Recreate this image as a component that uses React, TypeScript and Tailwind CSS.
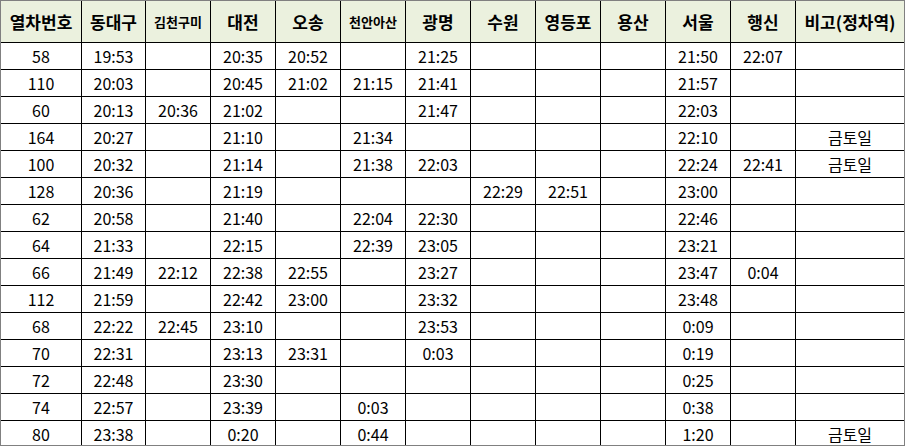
import React from "react";

/**
 * KTX timetable sheet (동대구 → 서울/행신)
 */

const HEADERS: { label: string; small?: boolean }[] = [
  { label: "열차번호" },
  { label: "동대구" },
  { label: "김천구미", small: true },
  { label: "대전" },
  { label: "오송" },
  { label: "천안아산", small: true },
  { label: "광명" },
  { label: "수원" },
  { label: "영등포" },
  { label: "용산" },
  { label: "서울" },
  { label: "행신" },
  { label: "비고(정차역)" },
];

const ROWS: string[][] = [
  ["58", "19:53", "", "20:35", "20:52", "", "21:25", "", "", "", "21:50", "22:07", ""],
  ["110", "20:03", "", "20:45", "21:02", "21:15", "21:41", "", "", "", "21:57", "", ""],
  ["60", "20:13", "20:36", "21:02", "", "", "21:47", "", "", "", "22:03", "", ""],
  ["164", "20:27", "", "21:10", "", "21:34", "", "", "", "", "22:10", "", "금토일"],
  ["100", "20:32", "", "21:14", "", "21:38", "22:03", "", "", "", "22:24", "22:41", "금토일"],
  ["128", "20:36", "", "21:19", "", "", "", "22:29", "22:51", "", "23:00", "", ""],
  ["62", "20:58", "", "21:40", "", "22:04", "22:30", "", "", "", "22:46", "", ""],
  ["64", "21:33", "", "22:15", "", "22:39", "23:05", "", "", "", "23:21", "", ""],
  ["66", "21:49", "22:12", "22:38", "22:55", "", "23:27", "", "", "", "23:47", "0:04", ""],
  ["112", "21:59", "", "22:42", "23:00", "", "23:32", "", "", "", "23:48", "", ""],
  ["68", "22:22", "22:45", "23:10", "", "", "23:53", "", "", "", "0:09", "", ""],
  ["70", "22:31", "", "23:13", "23:31", "", "0:03", "", "", "", "0:19", "", ""],
  ["72", "22:48", "", "23:30", "", "", "", "", "", "", "0:25", "", ""],
  ["74", "22:57", "", "23:39", "", "0:03", "", "", "", "", "0:38", "", ""],
  ["80", "23:38", "", "0:20", "", "0:44", "", "", "", "", "1:20", "", "금토일"],
];

export default function App() {
  return (
    <div
      className="w-[905px] h-[446px] overflow-hidden border border-[#808080] bg-white text-black"
      style={{ fontFamily: '"Noto Sans CJK KR", "Noto Sans", sans-serif' }}
    >
      <div className="grid grid-cols-[80px_63px_repeat(10,64px)_108px] grid-rows-[41px] auto-rows-[26px] gap-px bg-black">
        {HEADERS.map((h) => (
          <div
            key={h.label}
            className={`flex items-center justify-center bg-[#ebf1de] font-bold whitespace-nowrap ${
              h.small ? "text-[13px]" : "text-[17px]"
            }`}
          >
            {h.label}
          </div>
        ))}
        {ROWS.map((row, r) =>
          row.map((cell, c) => (
            <div
              key={`${r}-${c}`}
              className="flex items-center justify-center bg-white text-[16px] leading-none"
            >
              {cell}
            </div>
          ))
        )}
      </div>
    </div>
  );
}
